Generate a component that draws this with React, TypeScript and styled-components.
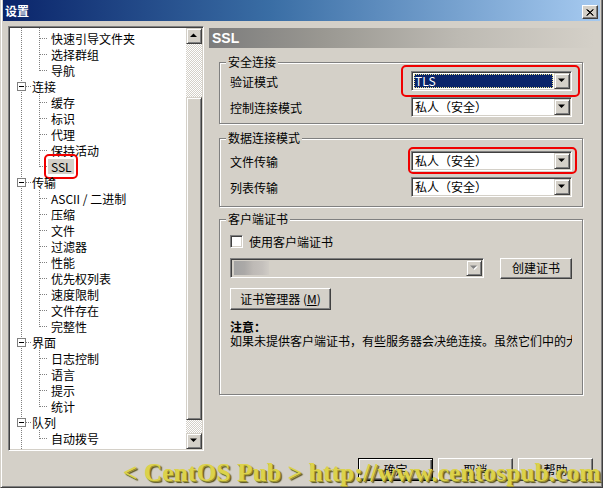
import React from 'react';
import styled, { createGlobalStyle } from 'styled-components';

const GlobalStyle = createGlobalStyle`
  html, body { margin: 0; padding: 0; background: #D4D0C8; }
  body {
    font-family: "Noto Sans CJK SC", "Noto Sans", sans-serif;
    font-size: 12px;
    color: #000;
  }
  * { box-sizing: border-box; }
`;

const Window = styled.div`
  position: relative;
  width: 603px;
  height: 488px;
  background: #D4D0C8;
  border: 1px solid;
  border-color: #D4D0C8 #404040 #404040 #D4D0C8;
  border-top: none;
  padding: 0 2px 2px 2px;
  box-shadow: inset 1px 0 #fff, inset -1px -1px #808080;
  display: flex;
  flex-direction: column;
  overflow: hidden;
`;

const TitleBar = styled.div`
  height: 21px;
  flex: none;
  display: flex;
  align-items: center;
  justify-content: space-between;
  padding: 0 2px 0 2px;
  background: linear-gradient(90deg, #0A246A 0%, #3A6EA5 45%, #A6CAF0 100%);
  color: #fff;
  font-weight: bold;
  font-size: 12px;
`;

const CloseBtn = styled.div`
  width: 16px;
  height: 14px;
  margin-top: 3px;
  background: #D4D0C8;
  border: 1px solid;
  border-color: #fff #404040 #404040 #fff;
  box-shadow: inset -1px -1px #808080;
  display: flex;
  align-items: center;
  justify-content: center;
`;

const Body = styled.div`
  display: flex;
  gap: 5px;
  padding: 5px 6px 0 5px;
`;

const TreeBox = styled.div`
  width: 196px;
  height: 425px;
  flex: none;
  display: flex;
  border: 1px solid;
  border-color: #808080 #fff #fff #808080;
  box-shadow: inset 1px 1px #404040, inset -1px -1px #D4D0C8;
  padding: 1px;
  background: #fff;
`;

const TreeList = styled.div`
  flex: 1;
  overflow: hidden;
  background: #fff;
  display: flex;
  flex-direction: column;
`;

const TreeInner = styled.div`
  margin-top: -14px;
  display: flex;
  flex-direction: column;
`;

const TreeRow = styled.div`
  display: flex;
  align-items: center;
  height: 16px;
  flex: none;
  white-space: nowrap;
`;

const GuideSvg = styled.svg`
  flex: none;
  display: block;
`;

const NodeLabel = styled.span<{ $selected?: boolean; $root?: boolean }>`
  position: relative;
  line-height: 15px;
  padding: ${p => (p.$root ? '0 2px 0 1px' : '0 2px 0 3px')};
  background: ${p => (p.$selected ? '#D4D0C8' : 'transparent')};
`;

const Mark = styled.span<{ $t: number; $r: number; $b: number; $l: number }>`
  position: absolute;
  top: ${p => -p.$t}px;
  right: ${p => -p.$r}px;
  bottom: ${p => -p.$b}px;
  left: ${p => -p.$l}px;
  border: 2px solid #F00000;
  border-radius: 5px;
  pointer-events: none;
`;

const ScrollBar = styled.div`
  width: 16px;
  flex: none;
  display: flex;
  flex-direction: column;
`;

const ScrollBtn = styled.div`
  width: 16px;
  height: 16px;
  flex: none;
  background: #D4D0C8;
  border: 1px solid;
  border-color: #D4D0C8 #404040 #404040 #D4D0C8;
  box-shadow: inset 1px 1px #fff, inset -1px -1px #808080;
  display: flex;
  align-items: center;
  justify-content: center;
`;

const Track = styled.div<{ $h?: number }>`
  flex: ${p => (p.$h ? `0 0 ${p.$h}px` : '1')};
  background-color: #fff;
  background-image: conic-gradient(#D4D0C8 25%, #fff 0 50%, #D4D0C8 0 75%, #fff 0);
  background-size: 2px 2px;
`;

const Thumb = styled.div`
  flex: 0 0 323px;
  background: #D4D0C8;
  border: 1px solid;
  border-color: #D4D0C8 #404040 #404040 #D4D0C8;
  box-shadow: inset 1px 1px #fff, inset -1px -1px #808080;
`;

const RightPanel = styled.div`
  flex: 1;
  min-width: 0;
  margin-top: 2px;
  display: flex;
  flex-direction: column;
`;

const PageHeader = styled.div`
  height: 20px;
  flex: none;
  padding-left: 3px;
  line-height: 20px;
  color: #fff;
  font-family: "Liberation Sans", Arial, sans-serif;
  font-weight: bold;
  font-size: 14px;
  background: linear-gradient(90deg, #7C7C7C 0%, #9A9892 30%, #BDBAB3 65%, #D4D0C8 100%);
`;

const Group = styled.fieldset<{ $mt: number; $pt: number; $pb: number }>`
  margin: ${p => p.$mt}px 11px 0 10px;
  padding: ${p => p.$pt}px 10px ${p => p.$pb}px 10px;
  border: 1px solid #808080;
  box-shadow: 1px 1px 0 #fff, inset 1px 1px 0 #fff;
  min-width: 0;
  display: flex;
  flex-direction: column;
`;

const Legend = styled.legend`
  margin-left: -4px;
  padding: 0 2px;
  line-height: 14px;
  font-size: 12px;
  background: #D4D0C8;
`;

const Rows = styled.div`
  display: flex;
  flex-direction: column;
  gap: 6px;
`;

const FormRow = styled.div`
  display: flex;
  align-items: center;
  justify-content: space-between;
  height: 20px;
`;

const ComboWrap = styled.span`
  position: relative;
  display: inline-flex;
`;

const Combo = styled.div<{ $w: number; $disabled?: boolean }>`
  width: ${p => p.$w}px;
  height: 20px;
  flex: none;
  display: flex;
  padding: 1px;
  border: 1px solid;
  border-color: #808080 #fff #fff #808080;
  box-shadow: inset 1px 1px #404040, inset -1px -1px #D4D0C8;
  background: ${p => (p.$disabled ? '#D4D0C8' : '#fff')};
`;

const ComboValue = styled.div<{ $selected?: boolean }>`
  flex: 1;
  min-width: 0;
  margin: 1px;
  padding-left: 1px;
  line-height: 14px;
  white-space: nowrap;
  overflow: hidden;
  color: ${p => (p.$selected ? '#fff' : '#000')};
  background: ${p => (p.$selected ? '#0A246A' : 'transparent')};
  outline: ${p => (p.$selected ? '1px dotted #F0E68C' : 'none')};
  outline-offset: -1px;
`;

const BlurThumb = styled.div`
  width: 35px;
  height: 100%;
  background: linear-gradient(90deg, #A4A4A4 0%, #ABA9A7 30%, #BEBAB6 55%, #C4C0BC 80%, #D0CCC6 100%);
`;

const DropBtn = styled.div`
  width: 16px;
  flex: none;
  background: #D4D0C8;
  border: 1px solid;
  border-color: #D4D0C8 #404040 #404040 #D4D0C8;
  box-shadow: inset 1px 1px #fff, inset -1px -1px #808080;
  display: flex;
  align-items: center;
  justify-content: center;
`;

const CheckRow = styled.label`
  display: flex;
  align-items: center;
  gap: 6px;
  height: 16px;
`;

const CheckBox = styled.span`
  width: 13px;
  height: 13px;
  flex: none;
  background: #fff;
  border: 1px solid;
  border-color: #808080 #fff #fff #808080;
  box-shadow: inset 1px 1px #404040, inset -1px -1px #D4D0C8;
`;

const CertRow = styled.div`
  margin-top: 8px;
  height: 22px;
  display: flex;
  align-items: center;
  gap: 16px;
`;

const Button = styled.button<{ $w: number; $h?: number; $default?: boolean }>`
  width: ${p => p.$w}px;
  height: ${p => p.$h ?? 21}px;
  flex: none;
  padding: 0;
  font-family: inherit;
  font-size: 12px;
  color: #000;
  background: #D4D0C8;
  border: 1px solid;
  border-color: ${p => (p.$default ? '#000' : '#fff #404040 #404040 #fff')};
  box-shadow: ${p =>
    p.$default
      ? 'inset 1px 1px #fff, inset -1px -1px #404040, inset -2px -2px #808080'
      : 'inset -1px -1px #808080'};
  text-align: center;
  line-height: 14px;
`;

const ManagerButton = styled(Button)`
  margin-top: 9px;
`;

const NoteTitle = styled.div`
  margin-top: 10px;
  font-weight: bold;
  line-height: 14px;
`;

const NoteText = styled.div`
  line-height: 14px;
  white-space: nowrap;
  overflow: hidden;
`;

const Footer = styled.div`
  display: flex;
  justify-content: flex-end;
  gap: 5px;
  padding: 7px 7px 0 0;
`;

const Watermark = styled.div`
  position: absolute;
  left: 122px;
  top: 460px;
  white-space: nowrap;
  font-family: "Liberation Serif", "Times New Roman", serif;
  font-weight: bold;
  font-size: 25px;
  line-height: 25px;
  letter-spacing: 0.3px;
  color: #DCD24A;
  text-shadow: 1px 1px 0 #9C9430, 2px 2px 1px #55501C;
  pointer-events: none;
`;

type TreeNode = { text: string; level: 0 | 1; last?: boolean; selected?: boolean };

const nodes: TreeNode[] = [
  { text: '', level: 1 },
  { text: '快速引导文件夹', level: 1 },
  { text: '选择群组', level: 1 },
  { text: '导航', level: 1, last: true },
  { text: '连接', level: 0 },
  { text: '缓存', level: 1 },
  { text: '标识', level: 1 },
  { text: '代理', level: 1 },
  { text: '保持活动', level: 1 },
  { text: 'SSL', level: 1, last: true, selected: true },
  { text: '传输', level: 0 },
  { text: 'ASCII / 二进制', level: 1 },
  { text: '压缩', level: 1 },
  { text: '文件', level: 1 },
  { text: '过滤器', level: 1 },
  { text: '性能', level: 1 },
  { text: '优先权列表', level: 1 },
  { text: '速度限制', level: 1 },
  { text: '文件存在', level: 1 },
  { text: '完整性', level: 1, last: true },
  { text: '界面', level: 0 },
  { text: '日志控制', level: 1 },
  { text: '语言', level: 1 },
  { text: '提示', level: 1 },
  { text: '统计', level: 1, last: true },
  { text: '队列', level: 0 },
  { text: '自动拨号', level: 1, last: true },
  { text: '其他', level: 0 },
];

const DOT = { stroke: '#808080', strokeDasharray: '1 1', shapeRendering: 'crispEdges' as const };

const Guide: React.FC<{ node: TreeNode }> = ({ node }) =>
  node.level === 0 ? (
    <GuideSvg width={21} height={16}>
      <line x1={11.5} y1={0} x2={11.5} y2={16} {...DOT} />
      <line x1={16} y1={8.5} x2={21} y2={8.5} {...DOT} />
      <rect x={7.5} y={4.5} width={8} height={8} fill="#fff" stroke="#808080" shapeRendering="crispEdges" />
      <line x1={9} y1={8.5} x2={14} y2={8.5} stroke="#000" shapeRendering="crispEdges" />
    </GuideSvg>
  ) : (
    <GuideSvg width={38} height={16}>
      <line x1={11.5} y1={0} x2={11.5} y2={16} {...DOT} />
      <line x1={29.5} y1={0} x2={29.5} y2={node.last ? 9 : 16} {...DOT} />
      <line x1={30} y1={8.5} x2={38} y2={8.5} {...DOT} />
    </GuideSvg>
  );

const Arrow: React.FC<{ up?: boolean; disabled?: boolean }> = ({ up, disabled }) => (
  <svg width={8} height={6} viewBox="0 0 8 6">
    {disabled && <polygon points="1,1.5 8,1.5 4.5,5" fill="#fff" />}
    <polygon
      points={up ? '3.5,0.5 7,4 0,4' : '0,0.5 7,0.5 3.5,4'}
      fill={disabled ? '#808080' : '#000'}
    />
  </svg>
);

const CloseIcon = () => (
  <svg width={8} height={7} viewBox="0 0 8 7">
    <path d="M0.5 0.5 L7 6.5 M1.5 0.5 L7.5 6.5 M7 0.5 L0.5 6.5 M7.5 0.5 L1 6.5" stroke="#000" strokeWidth={1} />
  </svg>
);

const ComboBox: React.FC<{
  value?: string;
  width: number;
  selected?: boolean;
  disabled?: boolean;
}> = ({ value, width, selected, disabled }) => (
  <Combo $w={width} $disabled={disabled}>
    {disabled ? (
      <ComboValue>
        <BlurThumb />
      </ComboValue>
    ) : (
      <ComboValue $selected={selected}>{value}</ComboValue>
    )}
    <DropBtn>
      <Arrow disabled={disabled} />
    </DropBtn>
  </Combo>
);

export default function App() {
  return (
    <>
      <GlobalStyle />
      <Window>
        <TitleBar>
          <span>设置</span>
          <CloseBtn>
            <CloseIcon />
          </CloseBtn>
        </TitleBar>
        <Body>
          <TreeBox>
            <TreeList>
              <TreeInner>
                {nodes.map((n, i) => (
                  <TreeRow key={i}>
                    <Guide node={n} />
                    <NodeLabel $root={n.level === 0} $selected={n.selected}>
                      {n.text}
                      {n.selected && <Mark $t={5} $r={4} $b={5} $l={4} />}
                    </NodeLabel>
                  </TreeRow>
                ))}
              </TreeInner>
            </TreeList>
            <ScrollBar>
              <ScrollBtn>
                <Arrow up />
              </ScrollBtn>
              <Track $h={53} />
              <Thumb />
              <Track />
              <ScrollBtn>
                <Arrow />
              </ScrollBtn>
            </ScrollBar>
          </TreeBox>
          <RightPanel>
            <PageHeader>SSL</PageHeader>
            <Group $mt={7} $pt={2} $pb={6}>
              <Legend>安全连接</Legend>
              <Rows>
                <FormRow>
                  <span>验证模式</span>
                  <ComboWrap>
                    <ComboBox width={161} value="TLS" selected />
                    <Mark $t={6} $r={8} $b={6} $l={10} />
                  </ComboWrap>
                </FormRow>
                <FormRow>
                  <span>控制连接模式</span>
                  <ComboBox width={161} value="私人（安全）" />
                </FormRow>
              </Rows>
            </Group>
            <Group $mt={7} $pt={6} $pb={9}>
              <Legend>数据连接模式</Legend>
              <Rows>
                <FormRow>
                  <span>文件传输</span>
                  <ComboWrap>
                    <ComboBox width={161} value="私人（安全）" />
                    <Mark $t={4} $r={5} $b={3} $l={3} />
                  </ComboWrap>
                </FormRow>
                <FormRow>
                  <span>列表传输</span>
                  <ComboBox width={161} value="私人（安全）" />
                </FormRow>
              </Rows>
            </Group>
            <Group $mt={5} $pt={7} $pb={46}>
              <Legend>客户端证书</Legend>
              <CheckRow>
                <CheckBox />
                <span>使用客户端证书</span>
              </CheckRow>
              <CertRow>
                <ComboBox width={254} disabled />
                <Button $w={72}>创建证书</Button>
              </CertRow>
              <ManagerButton $w={101} $h={22}>
                证书管理器 (<u>M</u>)
              </ManagerButton>
              <NoteTitle>注意：</NoteTitle>
              <NoteText>如果未提供客户端证书，有些服务器会决绝连接。虽然它们中的大多数服务器都允许</NoteText>
            </Group>
          </RightPanel>
        </Body>
        <Footer>
          <Button $w={75} $h={23} $default>确定</Button>
          <Button $w={75} $h={23}>取消</Button>
          <Button $w={75} $h={23}>帮助</Button>
        </Footer>
        <Watermark>&lt; CentOS Pub &gt; http://www.centospub.com</Watermark>
      </Window>
    </>
  );
}
